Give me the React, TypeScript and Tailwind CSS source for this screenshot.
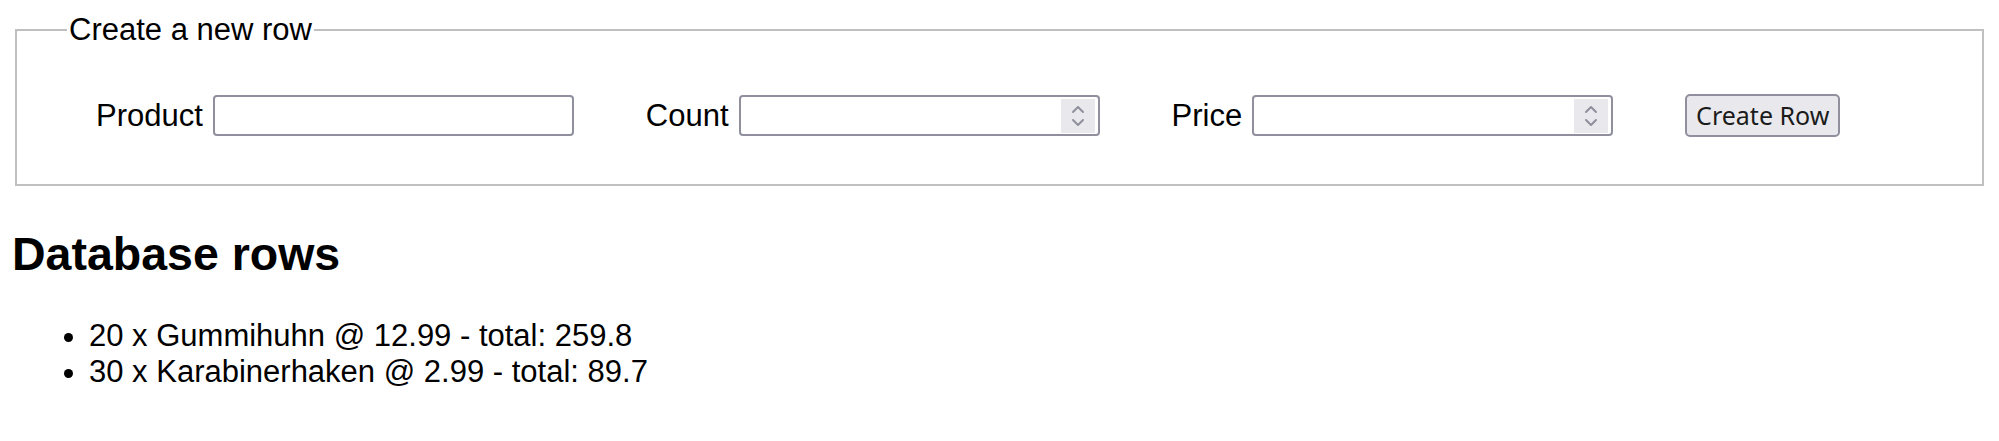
import { FormEvent, useState } from "react";

type Row = {
  product: string;
  count: number;
  price: number;
};

const initialRows: Row[] = [
  { product: "Gummihuhn", count: 20, price: 12.99 },
  { product: "Karabinerhaken", count: 30, price: 2.99 },
];

const Spinner = () => (
  <div className="flex h-[34px] w-[34px] shrink-0 items-center justify-center bg-[#e9e9ed]">
    <svg width="16" height="26" viewBox="0 0 16 26" fill="none" stroke="#8f8f9d" strokeWidth="2" strokeLinecap="round" strokeLinejoin="round">
      <polyline points="3,9 8,4 13,9" />
      <polyline points="3,17 8,22 13,17" />
    </svg>
  </div>
);

const NumberField = ({ value, onChange }: { value: string; onChange: (v: string) => void }) => (
  <div className="flex h-[41px] w-[361px] items-center rounded-[4px] border-2 border-[#8f8f9d] bg-white pr-[3px]">
    <input
      type="number"
      value={value}
      onChange={(e) => onChange(e.target.value)}
      className="h-full min-w-0 flex-1 bg-transparent px-[4px] text-[26px] outline-none [appearance:textfield] [&::-webkit-inner-spin-button]:appearance-none [&::-webkit-outer-spin-button]:appearance-none"
    />
    <Spinner />
  </div>
);

const App = () => {
  const [rows, setRows] = useState<Row[]>(initialRows);
  const [product, setProduct] = useState("");
  const [count, setCount] = useState("");
  const [price, setPrice] = useState("");

  const createRow = (e: FormEvent) => {
    e.preventDefault();
    if (!product) return;
    setRows([...rows, { product, count: Number(count), price: Number(price) }]);
    setProduct("");
    setCount("");
    setPrice("");
  };

  return (
    <div className="min-h-[441px] bg-white px-[12px] pt-[12px] font-['Liberation_Sans',Arial,sans-serif] text-[31px] leading-[1.15] text-black">
      <form onSubmit={createRow}>
        <fieldset className="mx-[3px] border-2 border-[#c0c0c0]">
          <legend className="ml-[50px] px-[2px] leading-[35px]">Create a new row</legend>

          <div className="flex items-center gap-[72px] pb-[47px] pl-[79px] pt-[47px]">
            <label className="flex items-center gap-[10px]">
              <span>Product</span>
              <input
                type="text"
                value={product}
                onChange={(e) => setProduct(e.target.value)}
                className="h-[41px] w-[361px] rounded-[4px] border-2 border-[#8f8f9d] bg-white px-[4px] text-[26px] outline-none"
              />
            </label>

            <label className="flex items-center gap-[10px]">
              <span>Count</span>
              <NumberField value={count} onChange={setCount} />
            </label>

            <label className="flex items-center gap-[10px]">
              <span>Price</span>
              <NumberField value={price} onChange={setPrice} />
            </label>

            <button
              type="submit"
              className="h-[43px] w-[155px] rounded-[5px] border-2 border-[#8f8f9d] bg-[#e9e9ed] font-['Noto_Sans',sans-serif] text-[25px] leading-none text-[#1b1b1b]"
            >
              Create Row
            </button>
          </div>
        </fieldset>
      </form>

      <h2 className="mt-[42px] text-[46.5px] font-bold leading-[53px]">Database rows</h2>

      <ul className="mt-[37px] list-disc pl-[77px]">
        {rows.map((row, i) => (
          <li key={i}>
            {row.count} x {row.product} @ {row.price} - total: {Math.round(row.count * row.price * 100) / 100}
          </li>
        ))}
      </ul>
    </div>
  );
};

export default App;
